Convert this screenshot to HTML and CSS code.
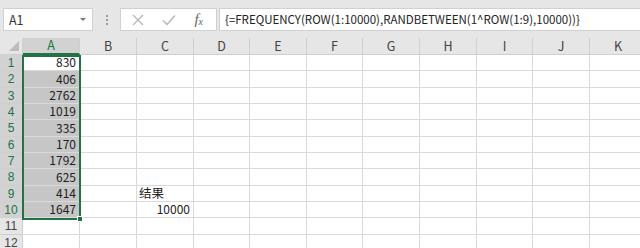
FILE: index.html
```html
<!DOCTYPE html>
<html lang="zh-CN">

<head>
    <meta charset="UTF-8">
    <title>FREQUENCY</title>
    <link rel="stylesheet" href="styles.css">
</head>

<body>
    <div class="toolbar">
        <div class="namebox">
            <span>A1</span>
            <i class="arrow"></i>
        </div>
        <div class="grip"><b></b><b></b><b></b></div>
        <div class="fbtns">
            <svg width="12" height="12" viewBox="0 0 12 12"><path d="M1 1L11 11M11 1L1 11" stroke="#b4b4b4" stroke-width="1.2" fill="none"/></svg>
            <svg width="14" height="12" viewBox="0 0 14 12"><path d="M1 6.5L5 10.5L13 1.5" stroke="#b4b4b4" stroke-width="1.4" fill="none"/></svg>
            <span class="fx">f<sub>x</sub></span>
        </div>
        <div class="formula">{=FREQUENCY(ROW(1:10000),RANDBETWEEN(1^ROW(1:9),10000))}</div>
    </div>

    <div class="sheet" id="sheet">
        <div class="sel"><i class="handle"></i></div>
    </div>

    <script>
        var sheet = document.querySelector('#sheet'),
            cols = ['A', 'B', 'C', 'D', 'E', 'F', 'G', 'H', 'I', 'J', 'K'],
            data = [830, 406, 2762, 1019, 335, 170, 1792, 625, 414, 1647], // A列数据
            rows = 12;

        function cell(cls, text) {
            var d = document.createElement('div');
            d.className = cls;
            if (text !== undefined) d.textContent = text;
            sheet.appendChild(d);
            return d;
        }

        cell('corner');
        cols.forEach(function (c, i) {
            cell(i == 0 ? 'colhead on' : 'colhead', c);
        });

        for (var r = 1; r <= rows; r++) {
            cell(r <= 10 ? 'rowhead on' : 'rowhead', r);
            for (var c = 0; c < cols.length; c++) {
                var cls = 'c';
                var text;
                if (c == 0 && r <= 10) {
                    cls += r == 1 ? ' num' : ' num picked';
                    text = data[r - 1];
                } else if (c == 2 && r == 9) {
                    cls += ' cjk';
                    text = '结果';
                } else if (c == 2 && r == 10) {
                    cls += ' num';
                    text = 10000;
                } else {
                    text = undefined;
                }
                cell(cls, text);
            }
        }
    </script>
</body>

</html>
```

FILE: styles.css
```css
* {
    margin: 0;
    padding: 0;
    box-sizing: border-box;
}

body {
    width: 640px;
    height: 248px;
    overflow: hidden;
    background: #fff;
    font-family: "Noto Sans CJK SC", "Liberation Sans", sans-serif;
    font-size: 12px;
    color: #222;
}

.toolbar {
    height: 38px;
    background: #e6e6e6;
    display: flex;
    align-items: flex-start;
    padding-top: 8px;
    white-space: nowrap;
}

.namebox {
    width: 90px;
    height: 23px;
    margin-left: 3px;
    background: #fff;
    border: 1px solid #d0d0d0;
    display: flex;
    align-items: center;
    justify-content: space-between;
    padding: 0 6px 0 5px;
    font-size: 12.5px;
    color: #333;
}

.namebox .arrow {
    width: 0;
    height: 0;
    border-left: 3px solid transparent;
    border-right: 3px solid transparent;
    border-top: 3px solid #777;
}

.grip {
    width: 27px;
    height: 23px;
    display: flex;
    flex-direction: column;
    align-items: center;
    justify-content: center;
    gap: 2px;
}

.grip b {
    width: 2px;
    height: 2px;
    background: #9a9a9a;
}

.fbtns {
    width: 97px;
    height: 23px;
    background: #fff;
    border: 1px solid #d0d0d0;
    display: flex;
    align-items: center;
    justify-content: space-between;
    padding: 0 13px 0 11px;
}

.fx {
    font-family: "Liberation Serif", serif;
    font-style: italic;
    font-size: 15px;
    color: #666;
    line-height: 1;
}

.fx sub {
    font-size: 10px;
    vertical-align: -1px;
}

.formula {
    flex: 1;
    height: 23px;
    margin-left: 2px;
    margin-right: -2px;
    background: #fff;
    border: 1px solid #d0d0d0;
    padding-left: 5px;
    line-height: 20px;
    font-size: 11.5px;
    color: #222;
}

.sheet {
    position: relative;
    display: grid;
    grid-template-columns: 23px 57px 57px 57px 56px 57px 56px 57px 57px 56px 57px 57px;
    grid-template-rows: 17px;
    grid-auto-rows: 16.33px;
}

.corner,
.colhead,
.rowhead {
    background: #e6e6e6;
    color: #444;
    border-right: 1px solid #cfcfcf;
    border-bottom: 1px solid #cfcfcf;
    display: flex;
    align-items: center;
    justify-content: center;
    line-height: 1;
    font-size: 12.5px;
}

.rowhead {
    font-family: "Liberation Sans", sans-serif;
    font-size: 12px;
    padding-top: 1px;
}

.corner {
    position: relative;
}

.corner::after {
    content: "";
    position: absolute;
    right: 3px;
    bottom: 3px;
    border-left: 10px solid transparent;
    border-bottom: 10px solid #bdbdbd;
}

.colhead.on {
    background: #d2d2d2;
    color: #217346;
    border-bottom: 2px solid #217346;
}

.rowhead.on {
    background: #d2d2d2;
    color: #217346;
}

.c {
    border-right: 1px solid #dadada;
    border-bottom: 1px solid #dadada;
    display: flex;
    align-items: flex-end;
    padding: 0 3px 1px 2px;
    line-height: 14px;
    white-space: nowrap;
}

.cjk {
    font-size: 12.5px;
}

.num {
    justify-content: flex-end;
}

.picked {
    background: #c6c6c6;
}

.sel {
    position: absolute;
    left: 22px;
    top: 17px;
    width: 59px;
    height: 165px;
    border: 2px solid #217346;
    pointer-events: none;
}

.handle {
    position: absolute;
    right: -4px;
    bottom: -4px;
    width: 6px;
    height: 6px;
    background: #217346;
    border: 1px solid #fff;
}
```
